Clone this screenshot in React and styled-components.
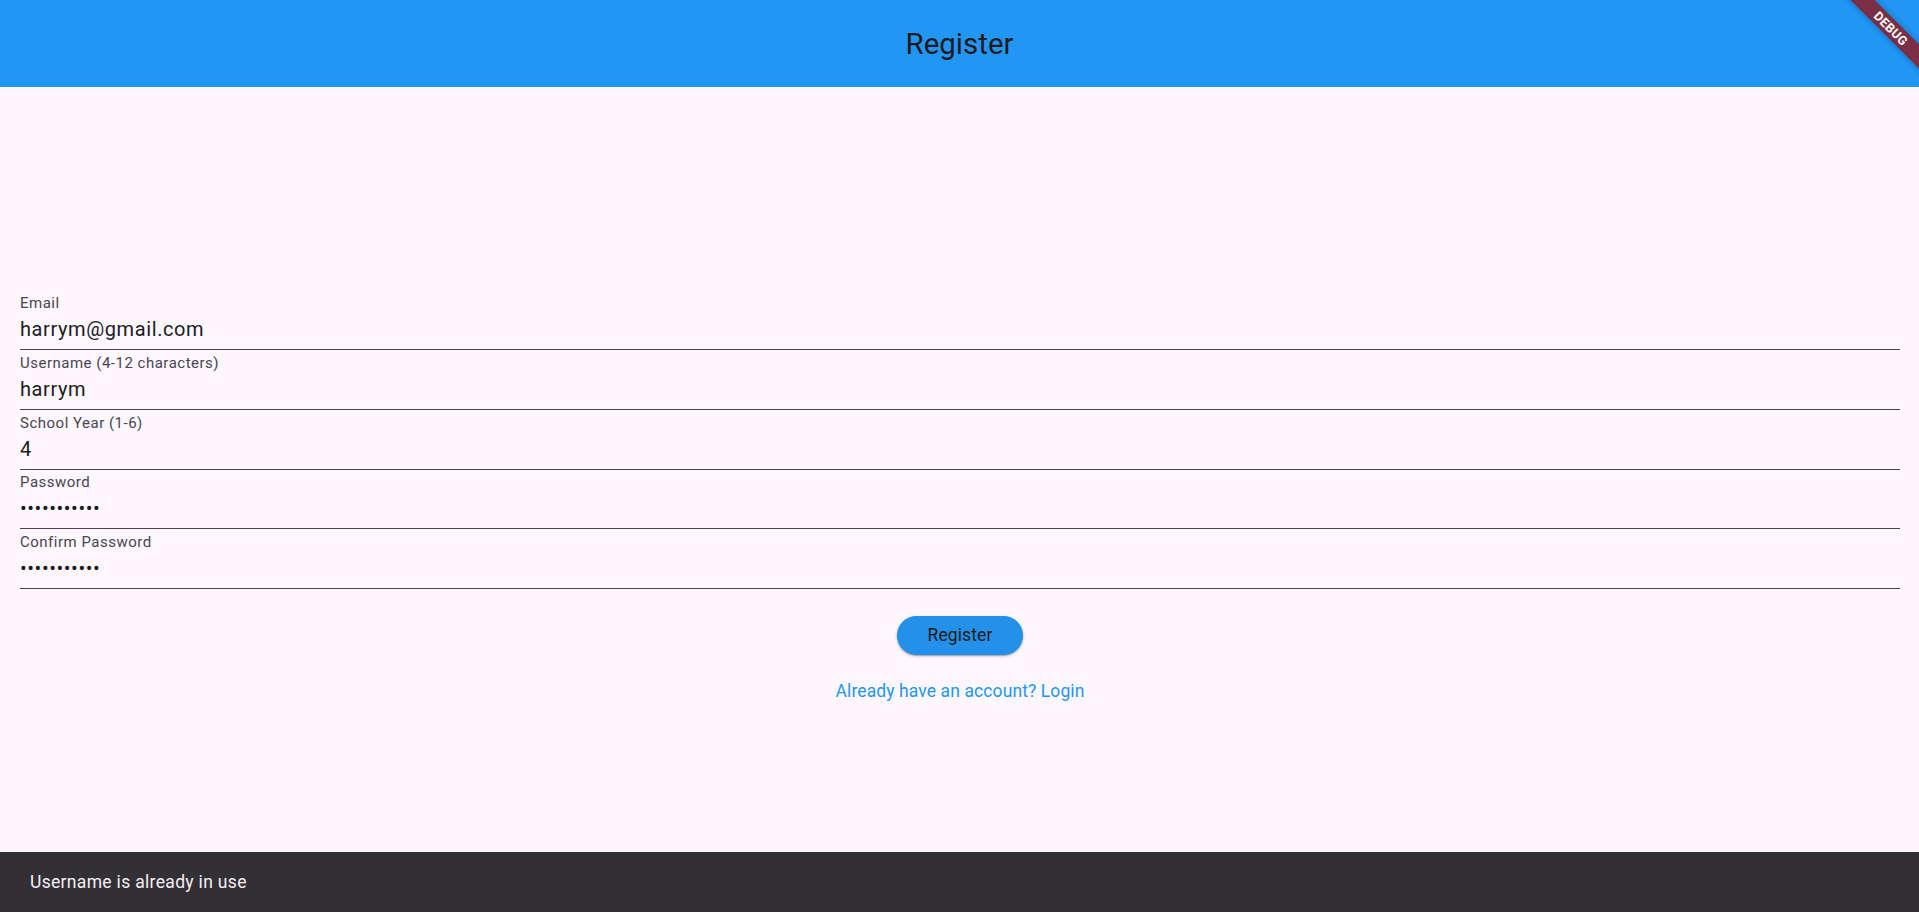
import styled, { createGlobalStyle } from "styled-components";

const GlobalStyle = createGlobalStyle`
  html, body {
    margin: 0;
    padding: 0;
    height: 100%;
  }
  body {
    font-family: Roboto, "Noto Sans", sans-serif;
    background-color: #fef7ff;
    overflow: hidden;
  }
  #root {
    height: 100%;
  }
`;

const Page = styled.div`
  position: relative;
  display: flex;
  flex-direction: column;
  height: 100vh;
  overflow: hidden;
`;

const AppBar = styled.header`
  flex: 0 0 87px;
  display: flex;
  align-items: center;
  justify-content: center;
  background-color: #2196f3;
`;

const Title = styled.h1`
  margin: 0;
  font-size: 29.5px;
  font-weight: 400;
  color: #1d1b20;
`;

const Body = styled.main`
  flex: 1;
  display: flex;
  flex-direction: column;
  justify-content: center;
  padding: 0 19px 6px 20px;
`;

const Field = styled.div`
  display: flex;
  flex-direction: column;
  padding: 3.75px 0 6px;
  border-bottom: 1px solid #49454f;
`;

const Label = styled.label`
  font-size: 15px;
  line-height: 18px;
  letter-spacing: 0.5px;
  color: #49454f;
`;

const Value = styled.div`
  margin-top: 3px;
  font-size: 20px;
  line-height: 28px;
  letter-spacing: ${(p) => (p.$secret ? "0.55px" : "0.6px")};
  color: #1d1b20;
`;

const Actions = styled.div`
  display: flex;
  flex-direction: column;
  align-items: center;
  margin-top: 26.5px;
  gap: 24px;
`;

const Button = styled.button`
  width: 126px;
  height: 39px;
  border: none;
  border-radius: 20px;
  background-color: #2390ea;
  color: #1d1b20;
  font-family: Roboto, sans-serif;
  font-size: 17.5px;
  letter-spacing: 0.1px;
  box-shadow: 0 1px 3px rgba(0, 0, 0, 0.3), 0 1px 1px rgba(0, 0, 0, 0.15);
  cursor: pointer;
`;

const LinkText = styled.a`
  font-size: 17.5px;
  line-height: 24px;
  color: #2196f3;
  text-decoration: none;
  letter-spacing: 0.1px;
`;

const Snackbar = styled.div`
  position: absolute;
  left: 0;
  right: 0;
  bottom: 0;
  height: 60px;
  display: flex;
  align-items: center;
  padding-left: 30px;
  background-color: #322f35;
  color: #f5eff7;
  font-size: 17.5px;
  letter-spacing: 0.32px;
`;

const DebugBanner = styled.div`
  position: absolute;
  top: 20px;
  right: -72px;
  width: 200px;
  height: 17px;
  display: flex;
  align-items: center;
  justify-content: center;
  transform: rotate(45deg);
  background-color: #7b2f47;
  box-shadow: 0 0 6px rgba(0, 0, 0, 0.3);
  color: #fff;
  font-size: 12.5px;
  font-weight: 700;
  letter-spacing: 0.4px;
`;

const fields = [
  { label: "Email", value: "harrym@gmail.com" },
  { label: "Username (4-12 characters)", value: "harrym" },
  { label: "School Year (1-6)", value: "4" },
  { label: "Password", value: "•••••••••••", secret: true },
  { label: "Confirm Password", value: "•••••••••••", secret: true },
];

export default function App() {
  return (
    <Page>
      <GlobalStyle />
      <AppBar>
        <Title>Register</Title>
      </AppBar>
      <Body>
        {fields.map((f) => (
          <Field key={f.label}>
            <Label>{f.label}</Label>
            <Value $secret={f.secret}>{f.value}</Value>
          </Field>
        ))}
        <Actions>
          <Button>Register</Button>
          <LinkText href="#">Already have an account? Login</LinkText>
        </Actions>
      </Body>
      <Snackbar>Username is already in use</Snackbar>
      <DebugBanner>DEBUG</DebugBanner>
    </Page>
  );
}
